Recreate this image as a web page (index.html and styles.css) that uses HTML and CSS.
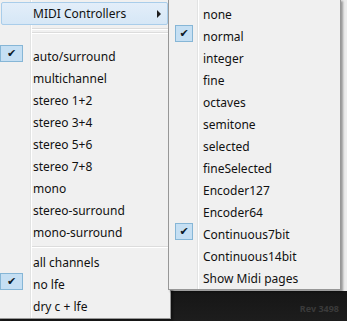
FILE: index.html
```html
<!DOCTYPE html>
<html lang="en">
<head>
    <meta charset="UTF-8">
    <meta name="viewport" content="width=device-width, initial-scale=1.0">
    <title>Channel menu</title>
    <link rel="stylesheet" href="styles.css">
</head>
<body>
    <div class="stage">
        <ul class="menu main-menu">
            <li class="item hover">MIDI Controllers<span class="arrow"></span></li>
            <li class="sep sep-top"></li>
            <li class="sep sep-top2"></li>
            <li class="item checked">auto/surround</li>
            <li class="item">multichannel</li>
            <li class="item">stereo 1+2</li>
            <li class="item">stereo 3+4</li>
            <li class="item">stereo 5+6</li>
            <li class="item">stereo 7+8</li>
            <li class="item">mono</li>
            <li class="item">stereo-surround</li>
            <li class="item">mono-surround</li>
            <li class="sep"></li>
            <li class="item">all channels</li>
            <li class="item checked">no lfe</li>
            <li class="item">dry c + lfe</li>
        </ul>
        <ul class="menu sub-menu">
            <li class="item">none</li>
            <li class="item checked">normal</li>
            <li class="item">integer</li>
            <li class="item">fine</li>
            <li class="item">octaves</li>
            <li class="item">semitone</li>
            <li class="item">selected</li>
            <li class="item">fineSelected</li>
            <li class="item">Encoder127</li>
            <li class="item">Encoder64</li>
            <li class="item checked">Continuous7bit</li>
            <li class="item">Continuous14bit</li>
            <li class="item">Show Midi pages</li>
        </ul>
    </div>
    <span class="rev">Rev 3498</span>
</body>
</html>
```

FILE: styles.css
```css
body {
    margin: 0;
    width: 347px;
    height: 321px;
    overflow: hidden;
    position: relative;
    font-family: 'Noto Sans', 'Segoe UI', sans-serif;
    font-size: 12px;
    color: #111;
    background: linear-gradient(to bottom, #ececec 0, #ececec 291px, #161616 291px, #1d1d1d 100%);
}
.stage {
    display: flex;
    align-items: flex-start;
}
.menu {
    list-style: none;
    margin: 0;
    padding: 0;
    background-color: #f0f0f0;
    border: 1px solid #979797;
    box-shadow: 2px 2px 2px rgba(0, 0, 0, 0.35);
    box-sizing: border-box;
    position: relative;
}
/* gutter line next to the check column */
.menu::before {
    content: "";
    position: absolute;
    top: 0;
    bottom: 0;
    width: 1px;
    background: #e2e3e3;
    box-shadow: 1px 0 0 #ffffff;
}
.main-menu {
    width: 172px;
    height: 320px;
    margin-top: -1px;
    margin-left: -1px;
    padding-top: 2px;
}
.main-menu::before {
    left: 30px;
}
.sub-menu {
    width: 173px;
    height: 291px;
    margin-left: -3px;
    margin-top: -1px;
    padding-top: 3px;
    z-index: 1;
}
.sub-menu::before {
    left: 28px;
}
.item {
    height: 21px;
    padding-top: 1px;
    line-height: 22px;
    padding-left: 33px;
    position: relative;
    white-space: nowrap;
}
.sub-menu .item {
    padding-left: 34px;
}
.hover {
    background: linear-gradient(to bottom, #e3eef9, #d6e7f6);
    border: 1px solid #a9cdea;
    border-radius: 2px;
    margin: 0 2px 0 1px;
    padding-top: 0;
    padding-left: 31px;
    height: 23px;
    line-height: 21px;
    box-sizing: border-box;
    z-index: 1;
}
.arrow {
    position: absolute;
    right: 6px;
    top: 7px;
    border-left: 4px solid #1e1e1e;
    border-top: 4px solid transparent;
    border-bottom: 4px solid transparent;
}
.checked::before {
    content: "\2714";
    position: absolute;
    left: 0;
    top: 0;
    width: 21px;
    height: 15px;
    line-height: 15px;
    text-align: center;
    font-family: 'DejaVu Sans', sans-serif;
    font-size: 11px;
    color: #0c1a28;
    background-color: #c5dff3;
    border: 1px solid #86b6d6;
}
.sub-menu .checked::before {
    left: 6px;
    width: 16px;
}
.sep {
    height: 8px;
    position: relative;
}
.sep::after {
    content: "";
    position: absolute;
    left: 32px;
    right: 2px;
    top: 3px;
    height: 1px;
    background: #dcdcdc;
    border-bottom: 1px solid #ffffff;
}
.sep-top {
    height: 6px;
}
.sep-top2 {
    height: 14px;
}
.sep-top2::after {
    top: 1px;
}
.rev {
    position: absolute;
    right: 8px;
    bottom: 6px;
    font-size: 9px;
    font-weight: bold;
    color: #3a3a3a;
}
```
